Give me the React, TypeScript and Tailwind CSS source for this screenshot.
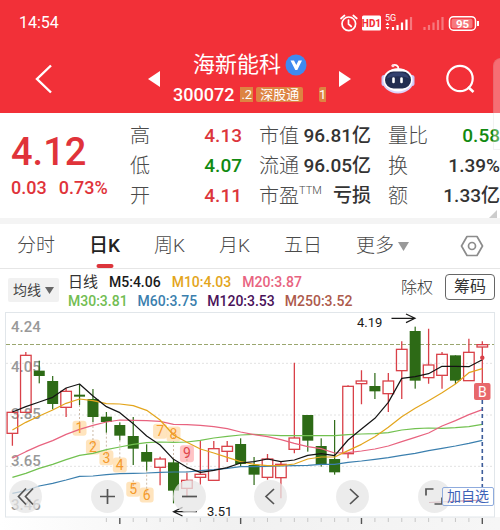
import React from 'react';
import clsx from 'clsx';

const QUOTES = [
  [
    { label: '高', value: '4.13', tone: 'up' },
    { label: '低', value: '4.07', tone: 'down' },
    { label: '开', value: '4.11', tone: 'up' },
  ],
  [
    { label: '市值', value: '96.81亿' },
    { label: '流通', value: '96.05亿' },
    { label: '市盈', sup: 'TTM', value: '亏损' },
  ],
  [
    { label: '量比', value: '0.58', tone: 'down' },
    { label: '换', value: '1.39%' },
    { label: '额', value: '1.33亿' },
  ],
];

const TABS = ['分时', '日K', '周K', '月K', '五日'];

// Levels are thirds of a pixel below the chart top: [high, body top, body bottom, low, rising]
const CANDLES = [
  [302, 307, 370, 407, 1],
  [126, 136, 307, 307, 1],
  [152, 182, 198, 220, 0],
  [198, 213, 282, 298, 0],
  [234, 244, 292, 321, 1],
  [222, 254, 260, 285, 0],
  [237, 267, 321, 336, 0],
  [306, 320, 336, 368, 0],
  [337, 345, 377, 391, 0],
  [321, 378, 416, 465, 0],
  [403, 426, 455, 482, 0],
  [440, 447, 472, 526, 1],
  [447, 457, 542, 580, 0],
  [489, 511, 535, 562, 1],
  [392, 493, 502, 525, 1],
  [393, 416, 511, 511, 1],
  [393, 409, 424, 456, 1],
  [385, 402, 462, 470, 0],
  [441, 465, 494, 525, 0],
  [432, 447, 502, 509, 1],
  [455, 463, 503, 565, 1],
  [158, 384, 418, 430, 1],
  [315, 315, 392, 425, 0],
  [385, 408, 465, 470, 0],
  [330, 447, 487, 494, 0],
  [226, 229, 431, 445, 1],
  [181, 213, 221, 283, 1],
  [189, 228, 244, 267, 0],
  [189, 213, 251, 306, 1],
  [94, 118, 182, 267, 1],
  [50, 63, 212, 236, 0],
  [56, 165, 203, 221, 1],
  [126, 133, 196, 236, 1],
  [136, 136, 212, 222, 0],
  [86, 127, 212, 212, 1],
  [94, 104, 111, 220, 1],
];

const AVERAGES = [
  {
    color: '#3b7fae',
    points: [550, 542, 528, 520, 510, 499, 498, 494, 491, 490, 489, 487, 486, 486, 482, 479, 475, 470, 470, 469, 468, 467, 466, 463, 463, 457, 453, 448, 443, 436, 430, 422, 415, 408, 400, 391],
  },
  {
    color: '#72c150',
    points: [502, 490, 475, 463, 449, 436, 430, 419, 411, 403, 398, 396, 397, 396, 391, 384, 379, 375, 373, 375, 377, 377, 377, 377, 377, 374, 372, 371, 368, 360, 356, 354, 355, 353, 350, 343],
  },
  {
    color: '#e8637f',
    points: [445, 425, 407, 392, 373, 358, 346, 336, 330, 331, 332, 334, 343, 344, 346, 350, 356, 366, 374, 380, 389, 400, 410, 416, 429, 428, 423, 417, 408, 395, 382, 369, 348, 332, 314, 299],
  },
  {
    color: '#e3a51c',
    points: [360, 337, 318, 300, 280, 267, 272, 281, 282, 287, 301, 330, 375, 397, 417, 429, 442, 455, 463, 467, 467, 462, 447, 441, 441, 422, 403, 380, 352, 320, 295, 272, 248, 222, 188, 176],
  },
  {
    color: '#141414',
    points: [306, 290, 276, 262, 234, 222, 258, 290, 308, 341, 378, 405, 448, 472, 487, 481, 473, 459, 455, 447, 455, 450, 436, 431, 437, 390, 357, 325, 277, 205, 200, 191, 169, 169, 170, 149],
  },
];

// [candle index, level of the badge, level where the dotted lead starts]
const COUNTS = [
  [5, 355, 285],
  [6, 411, 336],
  [7, 443, 368],
  [8, 465, 391],
  [9, 538, 510],
  [10, 555, 482],
  [11, 364, 364],
  [12, 372, 447],
  [13, 428, 489],
];

const AXIS = [
  { text: '4.24', level: 50 },
  { text: '4.05', level: 168 },
  { text: '3.85', level: 310 },
  { text: '3.65', level: 452 },
  { text: '3.46', level: 583 },
];

const px = (i: number) => 12.4 + i * 13.426;
const py = (level: number) => level / 3 - 2;

export default function App() {
  return (
    <div className="relative overflow-hidden bg-white font-['Roboto','Noto_Sans_CJK_SC',sans-serif] text-[#333]">
      <Header />
      <QuotePanel />
      <PeriodTabs />
      <IndicatorBar />
      <Chart />
      <div className="absolute -right-2 top-[58px] h-[92px] w-[15px] rounded-tl-lg border border-black/5 bg-white/30" />
    </div>
  );
}

function Header() {
  return (
    <header className="bg-[#f23038] text-white">
      <div className="flex h-[46px] items-center justify-between pl-[19px] pr-[21px]">
        <span className="text-base">14:54</span>
        <StatusIcons />
      </div>
      <div className="flex h-[67px] items-center pb-px pl-[35px] pr-[25px]">
        <button aria-label="返回">
          <svg width="17" height="30" viewBox="0 0 17 30" fill="none" stroke="currentColor" strokeWidth="2.4">
            <path d="M16 1.500 2 15l14 13.500" />
          </svg>
        </button>
        <button aria-label="上一只" className="ml-auto">
          <svg width="12" height="18" viewBox="0 0 12 18" fill="currentColor">
            <path d="M12 1v16L0 9z" />
          </svg>
        </button>
        <div className="mx-[13px] w-[153px]">
          <div className="flex items-center gap-1 pl-5">
            <h1 className="whitespace-nowrap text-[22px] leading-8">海新能科</h1>
            <svg width="22" height="22" viewBox="0 0 22 22" className="shrink-0">
              <circle cx="11" cy="11" r="10.500" fill="#3f8af0" />
              <path d="M5.500 6.500h3.500l2.300 4.500L13.500 6.500H17L12.300 16h-2z" fill="#fff" />
            </svg>
          </div>
          <div className="flex items-center gap-[3px] pb-px">
            <span className="mr-[3px] text-lg leading-7 font-medium">300072</span>
            <span className="bg-[#dd8442] px-px text-[13px] leading-[15px]">.2</span>
            <span className="whitespace-nowrap rounded-xs bg-[#dd8442] px-1 text-[13px] leading-[15px]">深股通</span>
            <span className="ml-auto w-[7px] shrink-0 overflow-hidden rounded-l-xs bg-[#dd8442] text-[13px] leading-[15px]">1</span>
          </div>
        </div>
        <button aria-label="下一只" className="mr-[30px]">
          <svg width="12" height="18" viewBox="0 0 12 18" fill="currentColor">
            <path d="M0 1v16l12-8z" />
          </svg>
        </button>
        <button aria-label="智能助手" className="mr-[31px]">
          <Robot />
        </button>
        <button aria-label="搜索">
          <svg width="29" height="30" viewBox="0 0 29 30" fill="none" stroke="currentColor" strokeWidth="2.200">
            <circle cx="14" cy="14.500" r="12.700" />
            <path d="m22 23 5.500 5" strokeWidth="2.600" />
          </svg>
        </button>
      </div>
    </header>
  );
}

function StatusIcons() {
  return (
    <svg width="140" height="20" viewBox="0 0 140 20" fill="none" stroke="#fff" className="font-['Roboto',sans-serif]">
      <g strokeWidth="1.700" strokeLinecap="round">
        <circle cx="9.800" cy="10.800" r="6.800" />
        <path d="M9.500 7v4l2.800 2.500M2 5.500l3.500-3M17.800 5.500l-3.500-3" />
      </g>
      <rect x="23" y="2.500" width="19" height="15" rx="1.500" fill="#fff" stroke="none" />
      <text x="32.500" y="13.500" textAnchor="middle" fontSize="10" fontWeight="800" fill="#f23038" stroke="none">HD1</text>
      <text x="46" y="8" fontSize="9" fill="#fff" stroke="none">5G</text>
      <path d="m46.500 12 2-2.500 2 2.500zM46.500 14l2 2.500 2-2.500z" fill="#fff" stroke="none" />
      <path d="M54 17v-3M58.500 17v-5M63 17V9.500M67.500 17V6.500" strokeWidth="2.200" />
      <path d="M72 17V4M85.500 17v-3M90 17v-5M94.500 17V9.500M99 17V7M103.500 17V4" strokeWidth="2.200" opacity=".35" />
      <rect x="110.500" y="3.700" width="26" height="13.500" rx="4" strokeWidth="1.500" />
      <rect x="112.500" y="5.700" width="21" height="9.500" rx="2" fill="#fff" fillOpacity=".35" stroke="none" />
      <path d="M139 8v5" strokeWidth="2" />
      <text x="123.500" y="14.500" textAnchor="middle" fontSize="11.500" fontWeight="700" fill="#fff" stroke="none">95</text>
    </svg>
  );
}

function Robot() {
  return (
    <svg width="34" height="32" viewBox="0 0 34 32">
      <path d="M11.500 2.500c3-1.500 6 0 6 3.500" fill="none" stroke="#fff" strokeWidth="1.800" strokeLinecap="round" />
      <circle cx="12" cy="2.800" r="1.500" fill="#ffd9e2" />
      <rect x=".5" y="12" width="5" height="11" rx="2.500" fill="#c9c4f5" />
      <rect x="28.500" y="12" width="5" height="11" rx="2.500" fill="#c9c4f5" />
      <ellipse cx="17" cy="18" rx="15.500" ry="12.500" fill="#dcd3fa" />
      <ellipse cx="17" cy="16.800" rx="14.500" ry="11.600" fill="#fff" />
      <rect x="4" y="8.500" width="26" height="17" rx="8.500" fill="#222d50" />
      <path d="M6 15.500c1-4.500 5-6 11-6s10 1.500 11 6c-6-3-16-3-22 0z" fill="#33416f" />
      <path d="M12.500 15.500v3.500M20.500 15.500v3.500" stroke="#fff" strokeWidth="2.600" strokeLinecap="round" />
    </svg>
  );
}

function QuotePanel() {
  return (
    <section className="relative flex border-b-[6px] border-[#f4f4f4] pt-2 pb-[7px]">
      <div className="w-[130px] shrink-0 pl-[11px] pt-[9px] text-[#e0333a]">
        <div className="text-[38px] leading-[44px] font-medium">4.12</div>
        <div className="flex gap-3 text-lg leading-7 font-medium">
          <span>0.03</span>
          <span>0.73%</span>
        </div>
      </div>
      <div className="grid flex-1 grid-cols-3 gap-[17px]">
        {QUOTES.map((column, i) => (
          <dl key={i}>
            {column.map((item) => (
              <QuoteItem key={item.label} {...item} />
            ))}
          </dl>
        ))}
      </div>
      <svg className="absolute right-[3px] bottom-0" width="8" height="8" viewBox="0 0 8 8">
        <path d="M8 0v8H0z" fill="#ccc" />
      </svg>
    </section>
  );
}

function QuoteItem({ label, sup, value, tone }: {
  label: string;
  sup?: string;
  value: string;
  tone?: string;
}) {
  return (
    <div className="flex h-[30px] items-center justify-between whitespace-nowrap">
      <dt className="flex text-xl leading-[30px] font-light text-[#4a4a4a]">
        {label}
        {sup && <span className="text-[11px] leading-5">{sup}</span>}
      </dt>
      <dd
        className={clsx(
          'text-[19px] leading-[30px] font-medium',
          tone === 'up' && 'text-[#dc353b]',
          tone === 'down' && 'text-[#118a11]',
        )}
      >
        {value}
      </dd>
    </div>
  );
}

function PeriodTabs() {
  return (
    <nav className="flex h-[45px] items-center border-b border-[#e6e6e6] pl-[17px] pr-4 text-[19px] text-[#4a4a4a]">
      <div className="flex gap-[34px]">
        {TABS.map((tab) => (
          <button
            key={tab}
            className={clsx('relative h-11 whitespace-nowrap', tab === '日K' ? 'font-medium text-[#222]' : 'font-light')}
          >
            {tab}
            {tab === '日K' && <span className="absolute bottom-0 left-1/2 h-1 w-[17px] -translate-x-1/2 rounded-sm bg-[#dc353b]" />}
          </button>
        ))}
        <button className="flex items-center gap-1 whitespace-nowrap font-light">
          更多
          <svg width="11" height="9" viewBox="0 0 11 9" fill="#999">
            <path d="M0 0h11L5.500 9z" />
          </svg>
        </button>
      </div>
      <button aria-label="设置" className="ml-auto">
        <svg width="24" height="22" viewBox="0 0 24 22" fill="none" stroke="#8c8c8c" strokeWidth="1.700" strokeLinejoin="round">
          <path d="M7 1.500h10l5.500 9.500-5.500 9.500H7L1.500 11z" />
          <circle cx="12" cy="11" r="3.500" />
        </svg>
      </button>
    </nav>
  );
}

function IndicatorBar() {
  return (
    <div className="flex h-[43px] items-start whitespace-nowrap pl-2 pr-[5px]">
      <button className="mt-[9px] flex h-6 items-center gap-1 rounded-xs bg-[#f1f1f1] px-[5px] text-sm text-[#444]">
        均线
        <svg width="9" height="7" viewBox="0 0 9 7" fill="#666">
          <path d="M0 0h9L4.500 7z" />
        </svg>
      </button>
      <div className="ml-[9px] pt-1 text-sm leading-[19px] font-medium">
        <div className="flex gap-[11px]">
          <span className="text-[15px] font-normal">日线</span>
          <span className="text-[#1a1a1a]">M5:4.06</span>
          <span className="text-[#e3a51c]">M10:4.03</span>
          <span className="text-[#e8637f]">M20:3.87</span>
        </div>
        <div className="flex gap-[10px]">
          <span className="text-[#72bd52]">M30:3.81</span>
          <span className="text-[#3b7fae]">M60:3.75</span>
          <span className="text-[#4a1259]">M120:3.53</span>
          <span className="text-[#ad5a4c]">M250:3.52</span>
        </div>
      </div>
      <button className="ml-auto mt-[7px] text-base leading-6 font-light">除权</button>
      <button className="ml-3 mt-[5px] h-[26px] rounded border border-[#666] px-2 text-base leading-6">筹码</button>
    </div>
  );
}

function Chart() {
  return (
    <section className="relative">
      <svg viewBox="0 0 500 218" className="block h-auto w-full font-['Roboto',sans-serif]">
        <defs>
          <linearGradient id="ruler" x1="0" x2="1" y1="0" y2="0">
            <stop offset="0" stopColor="#fff" />
            <stop offset=".45" stopColor="#f1f1f1" />
            <stop offset="1" stopColor="#f6f6f6" />
          </linearGradient>
        </defs>
        <rect x="0" y="205" width="500" height="13" fill="url(#ruler)" />
        <rect x="5.500" y=".5" width="489" height="204.500" fill="none" stroke="#e1e6ea" />
        {[160, 315, 469].map((level) => (
          <path key={level} d={`M6 ${py(level)}H494`} stroke="#e2e2e2" strokeDasharray="2 2" />
        ))}
        <path d="M6 32.500H494" stroke="#9aa66f" strokeDasharray="4 2" />

        <g fill="#999" fontSize="15" fontWeight="500">
          {AXIS.map(({ text, level }) => (
            <text key={text} x="11" y={py(level) + 5.500}>{text}</text>
          ))}
        </g>

        {COUNTS.map(([i, level], n) => (
          <rect
            key={n}
            x={px(i) - 7}
            y={py(level) - 7.500}
            width="14"
            height={n === 8 ? 17 : 15}
            rx="3"
            fill={n === 8 ? '#ffb9bb' : '#ffdfb2'}
            fillOpacity=".85"
          />
        ))}
        {COUNTS.map(([i, level, start], n) => (
          <path key={n} d={`M${px(i)} ${py(start)}V${py(level)}`} stroke="#bfa890" strokeWidth=".8" strokeDasharray="2 2" />
        ))}

        {CANDLES.map(([high, top, bottom, low, rising], i) =>
          rising ? (
            <g key={i} stroke="#d94048" fill="none" strokeWidth="1.300">
              <path d={`M${px(i)} ${py(high)}V${py(top)}M${px(i)} ${py(bottom)}V${py(low)}`} />
              <rect x={px(i) - 5.300} y={py(top)} width="10.600" height={(bottom - top) / 3} />
            </g>
          ) : (
            <g key={i} fill="#2d6a16">
              <rect x={px(i) - 0.6} y={py(high)} width="1.200" height={(low - high) / 3} />
              <rect x={px(i) - 5.500} y={py(top)} width="11" height={(bottom - top) / 3} />
            </g>
          ),
        )}

        {AVERAGES.map(({ color, points }) => (
          <polyline
            key={color}
            points={points.map((level, i) => `${px(i)},${py(level)}`).join(' ')}
            fill="none"
            stroke={color}
            strokeWidth="1.200"
            strokeLinejoin="round"
          />
        ))}
        <path d="M429 190.500 482.300 188" stroke="#a8485c" strokeWidth="1.200" />

        <g fontSize="14" textAnchor="middle">
          {COUNTS.map(([i, level], n) => (
            <text key={n} x={px(i)} y={py(level) + 5} fill={n === 8 ? '#e0444b' : '#f59a2c'}>{n + 1}</text>
          ))}
        </g>

        <path d="M482.300 88v88" stroke="#3d5c9a" strokeWidth="1.600" strokeDasharray="4 3" />
        <circle cx="482.300" cy="45.700" r="2.200" fill="#d94048" />
        <rect x="474" y="71" width="16.500" height="17" rx="2" fill="#e8686c" />
        <text x="482.300" y="84.500" textAnchor="middle" fontSize="14" fill="#fff">B</text>

        <g fontSize="13" fill="#1a1a1a">
          <text x="357" y="15">4.19</text>
          <text x="207" y="204">3.51</text>
        </g>
        <g fill="none" stroke="#1a1a1a" strokeWidth="1.200">
          <path d="M391.500 6.300h23M406 2l9 4.300-9 4.300" />
          <path d="M197 199.700h-23M182.500 195.400l-9 4.300 9 4.300" />
        </g>

        {CANDLES.map((_, i) =>
          i >= 7 ? (
            <path
              key={i}
              d={`M${px(i)} 206v${i % 9 === 8 ? 6 : 4}`}
              stroke={i % 9 === 8 ? '#555' : '#bbb'}
              strokeWidth={i % 9 === 8 ? 1.4 : 0.8}
            />
          ) : null,
        )}
      </svg>

      <div className="absolute bottom-[17px] left-[9px] right-[49px] flex justify-between">
        <ToolButton label="最早" path="M17 8.500l-7.500 8 7.500 8M24 8.500l-7.500 8 7.500 8" />
        <ToolButton label="放大" path="M16.500 9v15M9 16.500h15" />
        <ToolButton label="缩小" path="M9 16.500h15" />
        <ToolButton label="左移" path="M20 9l-8 7.500 8 7.500" />
        <ToolButton label="右移" path="M14 9l8 7.500-8 7.500" />
        <ToolButton label="全屏" path="M8 15.500V9h7.500M24 17.500V24h-7.500" />
      </div>
      <button className="absolute bottom-6 right-[6px] whitespace-nowrap rounded-xs border border-[#8fabdd] bg-white/40 px-1 text-sm leading-[17px] text-[#3d63b8]">
        加自选
      </button>
    </section>
  );
}

function ToolButton({ label, path }: { label: string; path: string }) {
  return (
    <button aria-label={label} className="size-[33px] rounded-full bg-[#e6e6e6]/75">
      <svg viewBox="0 0 33 33" fill="none" stroke="#555" strokeWidth="1.700">
        <path d={path} />
      </svg>
    </button>
  );
}
